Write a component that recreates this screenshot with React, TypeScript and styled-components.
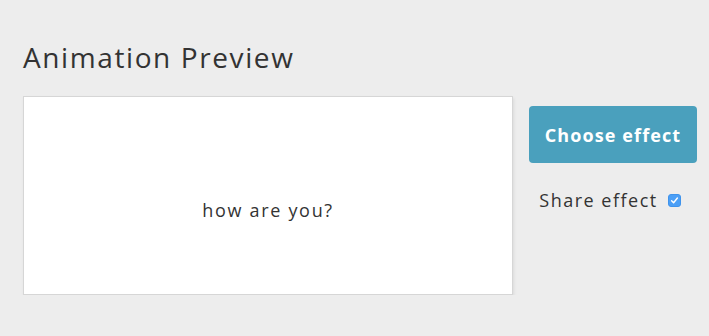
import React from "react";
import styled, { createGlobalStyle } from "styled-components";

const GlobalStyle = createGlobalStyle`
  html, body {
    margin: 0;
    padding: 0;
    background: #ededed;
  }
  body {
    font-family: "Open Sans", "Liberation Sans", sans-serif;
    color: #333333;
  }
`;

const Page = styled.div`
  padding: 37px 0 0 23px;
`;

const Title = styled.h1`
  margin: 0 0 19px;
  font-size: 28px;
  font-weight: 400;
  line-height: 40px;
  letter-spacing: 1.6px;
  color: #333333;
`;

const Row = styled.div`
  display: flex;
  align-items: flex-start;
  gap: 16px;
`;

const Preview = styled.div`
  box-sizing: content-box;
  width: 488px;
  height: 169px;
  padding-top: 28px;
  background: #ffffff;
  border: 1px solid #d6d6d6;
  box-shadow: 1px 2px 3px rgba(0, 0, 0, 0.08);
  display: flex;
  align-items: center;
  justify-content: center;
`;

const PreviewText = styled.span`
  font-size: 18px;
  letter-spacing: 1.7px;
`;

const Side = styled.div`
  display: flex;
  flex-direction: column;
  align-items: center;
  width: 168px;
  padding-top: 10px;
  gap: 25px;
`;

const ChooseButton = styled.button`
  width: 168px;
  height: 57px;
  border: none;
  border-radius: 4px;
  background: #4aa0bd;
  color: #ffffff;
  font-family: "Open Sans", "Liberation Sans", sans-serif;
  font-size: 18px;
  font-weight: 700;
  letter-spacing: 1.1px;
  cursor: pointer;
`;

const ShareLabel = styled.label`
  display: flex;
  align-items: center;
  gap: 10px;
  font-size: 18px;
  letter-spacing: 1.5px;
  margin-right: 6px;
  cursor: pointer;
`;

const HiddenInput = styled.input`
  position: absolute;
  opacity: 0;
  width: 0;
  height: 0;
  margin: 0;
`;

const Box = styled.span<{ $checked: boolean }>`
  display: inline-flex;
  align-items: center;
  justify-content: center;
  width: 13px;
  height: 13px;
  margin-top: 1px;
  border-radius: 3px;
  box-sizing: border-box;
  background: ${(p) => (p.$checked ? "#4b9ff6" : "#ffffff")};
  border: 1px solid ${(p) => (p.$checked ? "#3f93ec" : "#b5b5b5")};
`;

export default function App() {
  const [shared, setShared] = React.useState(true);
  return (
    <>
      <GlobalStyle />
      <Page>
        <Title>Animation Preview</Title>
        <Row>
          <Preview>
            <PreviewText>how are you?</PreviewText>
          </Preview>
          <Side>
            <ChooseButton>Choose effect</ChooseButton>
            <ShareLabel>
              Share effect
              <HiddenInput
                type="checkbox"
                checked={shared}
                onChange={(e) => setShared(e.target.checked)}
              />
              <Box $checked={shared}>
                {shared && (
                  <svg width="9" height="9" viewBox="0 0 9 9">
                    <path
                      d="M1.6 4.8 L3.6 6.8 L7.4 2"
                      fill="none"
                      stroke="#ffffff"
                      strokeWidth="1.4"
                      strokeLinecap="round"
                      strokeLinejoin="round"
                    />
                  </svg>
                )}
              </Box>
            </ShareLabel>
          </Side>
        </Row>
      </Page>
    </>
  );
}
